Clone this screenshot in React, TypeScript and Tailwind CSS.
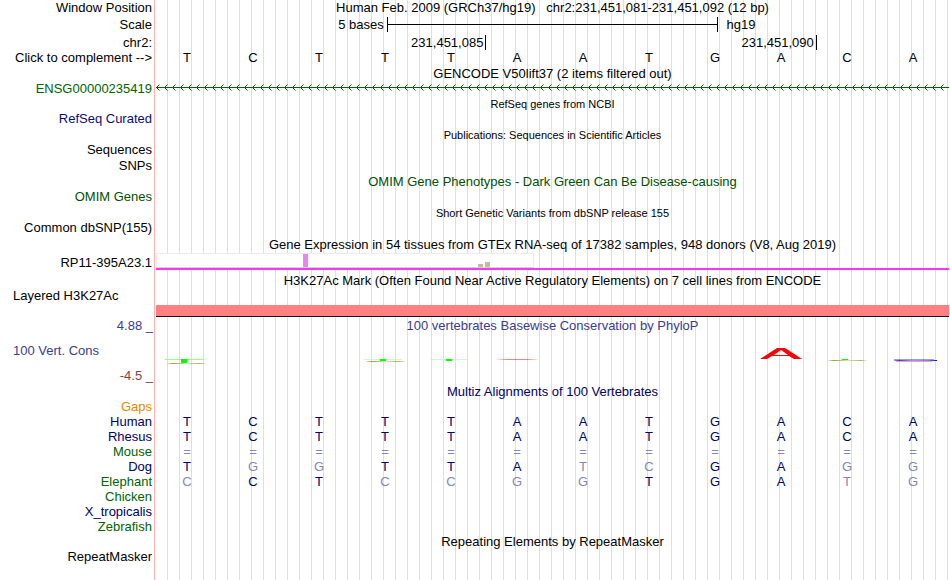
import type { ReactNode } from "react";
import clsx from "clsx";

type RowProps = {
  label?: ReactNode;
  className?: string;
  labelClass?: string;
  children?: ReactNode;
};

function Row({ label, className = "h-[15px]", labelClass, children }: RowProps) {
  return (
    <div className={clsx("flex items-end", className)}>
      <div className={clsx("w-[154px] shrink-0 pr-0.5 text-right", labelClass)}>{label}</div>
      <div className="min-w-0 flex-1">{children}</div>
    </div>
  );
}

function Title({ children, className }: { children: ReactNode; className?: string }) {
  return <h2 className={clsx("pl-px text-center", className)}>{children}</h2>;
}

function Bases({ seq, match }: { seq: string; match?: string }) {
  return (
    <div className="grid grid-cols-12 pr-1 text-center">
      {seq.split("").map((base, i) => (
        <span key={i} className={match && match[i] !== base ? "text-[#8585b5]" : ""}>
          {base}
        </span>
      ))}
    </div>
  );
}

const human = "TCTTTAATGACA";

const species = [
  { name: "Gaps", color: "text-[#e68a00]", seq: "" },
  { name: "Human", color: "text-[#000064]", seq: human },
  { name: "Rhesus", color: "text-[#000064]", seq: human },
  { name: "Mouse", color: "text-[#006400]", seq: "============" },
  { name: "Dog", color: "text-[#000064]", seq: "TGGTTATCGAGG" },
  { name: "Elephant", color: "text-[#006400]", seq: "CCTCCGGTGATG" },
  { name: "Chicken", color: "text-[#006400]", seq: "" },
  { name: "X_tropicalis", color: "text-[#000064]", seq: "" },
  { name: "Zebrafish", color: "text-[#006400]", seq: "" },
];

function GeneArrows() {
  return (
    <svg className="block h-[15px] w-full text-[#006400]" aria-label="Reverse strand transcript">
      <defs>
        <pattern id="strand" width="8" height="15" patternUnits="userSpaceOnUse">
          <path d="M3.5 3.5 L0.5 6.5 L3.5 9.5" fill="none" stroke="currentColor" />
        </pattern>
      </defs>
      <rect width="100%" height="15" fill="url(#strand)" />
      <rect y="6" width="100%" height="1" fill="currentColor" />
    </svg>
  );
}

function Expression() {
  return (
    <div className="pr-px pl-0.5">
      <div className="h-[15px] w-[378px] border border-[#ececec] border-b-[#d2d2d2] bg-white">
        <svg viewBox="0 0 376 13" className="block h-[13px] w-full" aria-label="Tissue expression">
          <rect x="146" y="0" width="5" height="13" fill="#ee82ee" />
          <rect x="321" y="10" width="5" height="3" fill="#cdb79e" />
          <rect x="328" y="8" width="5" height="5" fill="#cdb79e" />
        </svg>
      </div>
      <div className="h-0.5 bg-[#ff32ff]" />
    </div>
  );
}

function Conservation() {
  return (
    <svg
      viewBox="0 0 793 20"
      preserveAspectRatio="none"
      className="block h-5 w-full"
      aria-label="PhyloP scores"
    >
      <defs>
        <linearGradient id="olive">
          <stop offset="0" stopColor="#a0a028" stopOpacity="0.2" />
          <stop offset="0.15" stopColor="#a0a028" />
          <stop offset="0.5" stopColor="#a0a028" stopOpacity="0.3" />
          <stop offset="0.85" stopColor="#a0a028" stopOpacity="0.8" />
          <stop offset="1" stopColor="#a0a028" stopOpacity="0.1" />
        </linearGradient>
        <linearGradient id="red">
          <stop offset="0" stopColor="#ff0000" stopOpacity="0.1" />
          <stop offset="0.25" stopColor="#ff0000" stopOpacity="0.5" />
          <stop offset="0.75" stopColor="#ff0000" stopOpacity="0.5" />
          <stop offset="1" stopColor="#ff0000" stopOpacity="0.1" />
        </linearGradient>
        <linearGradient id="blue">
          <stop offset="0" stopColor="#0000ff" stopOpacity="0.4" />
          <stop offset="0.12" stopColor="#0000ff" stopOpacity="0.8" />
          <stop offset="0.4" stopColor="#0000ff" stopOpacity="0.4" />
          <stop offset="0.8" stopColor="#0000ff" stopOpacity="0.5" />
          <stop offset="1" stopColor="#0000ff" />
        </linearGradient>
      </defs>
      <rect x="9" y="14" width="38" height="1" fill="#8cff8c" />
      <rect x="25" y="14" width="6" height="4" fill="#00ff00" />
      <rect x="11" y="18" width="39" height="1" fill="url(#olive)" />
      <rect x="208" y="14" width="38" height="1" fill="#d2f5d2" />
      <rect x="224" y="14" width="6" height="2" fill="#00ff00" />
      <rect x="210" y="16" width="39" height="1" fill="url(#olive)" />
      <rect x="274" y="14" width="38" height="1" fill="#d2f5d2" />
      <rect x="290" y="14" width="6" height="2" fill="#00ff00" />
      <rect x="341" y="14" width="40" height="1" fill="url(#red)" />
      <path
        fill="#ff0000"
        fillRule="evenodd"
        d="M604 14 L621 3 H629 L646 14 H638 L633 11 H616 L611 14 Z M618 10 H632 L625 5 Z"
      />
      <rect x="672" y="15" width="39" height="1" fill="url(#olive)" />
      <rect x="686" y="14" width="6" height="1" fill="#00ff00" />
      <rect x="738" y="14" width="40" height="1" fill="#0000ff" fillOpacity="0.4" />
      <rect x="738" y="15" width="43" height="1" fill="url(#blue)" />
      <rect x="740" y="16" width="36" height="1" fill="#ffa0a0" />
    </svg>
  );
}

export default function App() {
  return (
    <main className="min-h-screen overflow-hidden bg-white font-['Liberation_Sans',sans-serif] text-[13px] leading-[15px] text-black">
      <div className="min-h-screen bg-[linear-gradient(to_right,#ffffff_154px,#ffb4b4_154px,#ffb4b4_155px,#ffffff_155px,#ffffff_156px,transparent_156px),repeating-linear-gradient(to_right,#ffffff_0px,#ffffff_11px,#dcdcfa_11px,#dcdcfa_12px)]">
        <Row label="Window Position">
          <h1 className="pl-px text-center whitespace-pre">
            Human Feb. 2009 (GRCh37/hg19)   chr2:231,451,081-231,451,092 (12 bp)
          </h1>
        </Row>
        <Row label="Scale" className="h-[17px]">
          <div className="flex items-center">
            <span className="w-[29%] pr-px text-right">5 bases</span>
            <div className="ml-0.5 flex h-[15px] w-5/12 items-center border-x border-black">
              <div className="h-px w-full bg-black" />
            </div>
            <span className="ml-2">hg19</span>
          </div>
        </Row>
        <Row label="chr2:" className="h-[18px]">
          <div className="flex pr-px pl-0.5 text-right">
            <span className="w-5/12 border-r border-black pr-0.5">231,451,085</span>
            <span className="w-5/12 border-r border-black pr-0.5">231,451,090</span>
          </div>
        </Row>
        <Row label={<button type="button">Click to complement --&gt;</button>}>
          <Bases seq={human} />
        </Row>
        <Row className="h-4">
          <Title>GENCODE V50lift37 (2 items filtered out)</Title>
        </Row>
        <Row label="ENSG00000235419" labelClass="text-[#006400]">
          <div className="pr-px pl-0.5">
            <GeneArrows />
          </div>
        </Row>
        <Row>
          <Title className="text-[11px] leading-[13px]">RefSeq genes from NCBI</Title>
        </Row>
        <Row label="RefSeq Curated" labelClass="text-[#0c0c78]" />
        <Row className="h-4">
          <Title className="text-[11px] leading-[13px]">Publications: Sequences in Scientific Articles</Title>
        </Row>
        <Row label="Sequences" />
        <Row label="SNPs" className="h-4" />
        <Row className="h-4">
          <Title className="text-[#005000]">OMIM Gene Phenotypes - Dark Green Can Be Disease-causing</Title>
        </Row>
        <Row label="OMIM Genes" labelClass="text-[#005000]" />
        <Row className="h-4">
          <Title className="text-[11px] leading-[13px]">Short Genetic Variants from dbSNP release 155</Title>
        </Row>
        <Row label="Common dbSNP(155)" />
        <Row className="h-[17px]">
          <Title>Gene Expression in 54 tissues from GTEx RNA-seq of 17382 samples, 948 donors (V8, Aug 2019)</Title>
        </Row>
        <Row label="RP11-395A23.1" className="h-[18px]">
          <Expression />
        </Row>
        <Row className="h-[18px]">
          <Title>H3K27Ac Mark (Often Found Near Active Regulatory Elements) on 7 cell lines from ENCODE</Title>
        </Row>
        <Row
          className="h-[29px]"
          labelClass="self-start"
          label={<span className="block pl-[13px] text-left">Layered H3K27Ac</span>}
        >
          <div className="pr-px pl-0.5">
            <div className="h-3 border-b border-[#14141e] bg-[#ff8080]" />
          </div>
        </Row>
        <div className="flex pt-px">
          <div className="flex w-[154px] shrink-0 flex-col gap-2.5 pr-px text-right text-[#3c3c8c]">
            <span>4.88 _</span>
            <span className="pl-[13px] text-left">100 Vert. Cons</span>
            <span className="text-[#8c3c3c]">-4.5 _</span>
          </div>
          <div className="min-w-0 flex-1">
            <Title className="text-[#3c3c8c]">100 vertebrates Basewise Conservation by PhyloP</Title>
            <div className="pt-3 pr-px pl-0.5">
              <Conservation />
            </div>
          </div>
        </div>
        <Row className="h-4">
          <Title className="text-[#000064]">Multiz Alignments of 100 Vertebrates</Title>
        </Row>
        {species.map(({ name, color, seq }) => (
          <Row key={name} label={name} labelClass={color}>
            <div className="text-[#000064]">
              <Bases seq={seq} match={human} />
            </div>
          </Row>
        ))}
        <Row>
          <Title>Repeating Elements by RepeatMasker</Title>
        </Row>
        <Row label="RepeatMasker" />
      </div>
    </main>
  );
}
